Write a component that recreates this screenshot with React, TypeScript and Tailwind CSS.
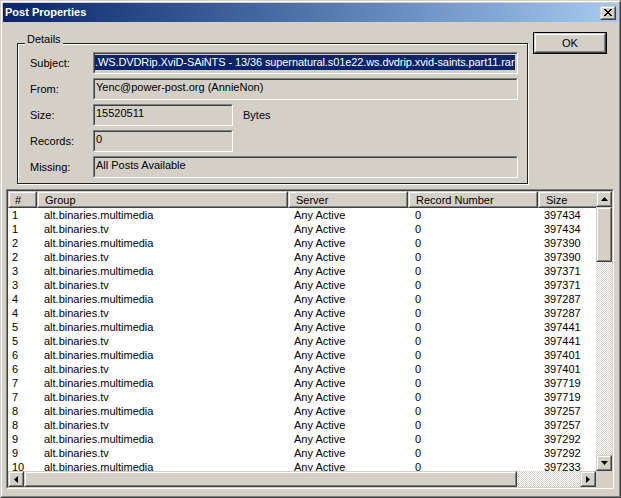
import React from 'react';

const rows: [number, string, number][] = [
  [1, 'alt.binaries.multimedia', 397434],
  [1, 'alt.binaries.tv', 397434],
  [2, 'alt.binaries.multimedia', 397390],
  [2, 'alt.binaries.tv', 397390],
  [3, 'alt.binaries.multimedia', 397371],
  [3, 'alt.binaries.tv', 397371],
  [4, 'alt.binaries.multimedia', 397287],
  [4, 'alt.binaries.tv', 397287],
  [5, 'alt.binaries.multimedia', 397441],
  [5, 'alt.binaries.tv', 397441],
  [6, 'alt.binaries.multimedia', 397401],
  [6, 'alt.binaries.tv', 397401],
  [7, 'alt.binaries.multimedia', 397719],
  [7, 'alt.binaries.tv', 397719],
  [8, 'alt.binaries.multimedia', 397257],
  [8, 'alt.binaries.tv', 397257],
  [9, 'alt.binaries.multimedia', 397292],
  [9, 'alt.binaries.tv', 397292],
  [10, 'alt.binaries.multimedia', 397233],
];

// classic 3D raised box (buttons, headers, scroll arrows)
function Raised({ className = '', inner = '', children }: { className?: string; inner?: string; children?: React.ReactNode }) {
  return (
    <div className={`border border-t-[#d4d0c8] border-l-[#d4d0c8] border-r-[#404040] border-b-[#404040] ${className}`}>
      <div className={`h-full w-full border border-t-white border-l-white border-r-[#808080] border-b-[#808080] bg-[#d4d0c8] ${inner}`}>
        {children}
      </div>
    </div>
  );
}

function Field({ className = '', children }: { className?: string; children?: React.ReactNode }) {
  return (
    <div className={`h-[22px] border border-t-[#808080] border-l-[#808080] border-r-white border-b-white ${className}`}>
      <div className="h-full border border-t-[#404040] border-l-[#404040] border-r-[#d4d0c8] border-b-[#d4d0c8] bg-[#d4d0c8] overflow-hidden whitespace-nowrap">
        {children}
      </div>
    </div>
  );
}

function Arrow({ dir }: { dir: 'up' | 'down' | 'left' | 'right' }) {
  const pts = {
    up: '3.5,0 7,4 0,4',
    down: '0,0 7,0 3.5,4',
    left: '4,0 4,7 0,3.5',
    right: '0,0 4,3.5 0,7',
  }[dir];
  const vertical = dir === 'up' || dir === 'down';
  return (
    <Raised className="w-[16px] h-[16px] shrink-0" inner="flex items-center justify-center">
      <svg width={vertical ? 7 : 4} height={vertical ? 4 : 7} viewBox={vertical ? '0 0 7 4' : '0 0 4 7'}>
        <polygon points={pts} fill="#000" />
      </svg>
    </Raised>
  );
}

const track = '[background-image:repeating-conic-gradient(#fff_0%_25%,#d4d0c8_0%_50%)] [background-size:2px_2px]';

export default function App() {
  return (
    <div className="w-[621px] h-[498px] font-[Liberation_Sans,Arial,sans-serif] text-[11px] text-black border border-t-[#d4d0c8] border-l-[#d4d0c8] border-r-[#404040] border-b-[#404040]">
      <div className="h-full border border-t-white border-l-white border-r-[#808080] border-b-[#808080] bg-[#d4d0c8] p-[1px] flex flex-col">
        {/* Title bar */}
        <div className="h-[19px] shrink-0 flex items-center justify-between bg-linear-to-r from-[#0a246a] to-[#a6caf0]">
          <span className="pl-[2px] font-bold text-white leading-[19px]">Post Properties</span>
          <Raised className="w-[16px] h-[14px] mr-[2px]" inner="flex items-center justify-center">
            <svg width="8" height="7" viewBox="0 0 8 7" shapeRendering="crispEdges">
              <path d="M0 0h2v1h1v1h2v-1h1v-1h2v1h-1v1h-1v1h-1v1h1v1h1v1h1v1h-2v-1h-1v-1h-2v1h-1v1h-2v-1h1v-1h1v-1h1v-1h-1v-1h-1v-1h-1z" fill="#000" />
            </svg>
          </Raised>
        </div>

        {/* Body */}
        <div className="flex-1 flex flex-col">
          <div className="flex items-start pl-[14px]">
            {/* Details group */}
            <div className="relative mt-[21px] w-[511px] border border-[#202020] shadow-[1px_1px_0_#fff,inset_1px_1px_0_#fff] pt-[8px] pb-[5px] pl-[12px] pr-[8px]">
              <span className="absolute -top-[11px] left-[7px] bg-[#d4d0c8] px-[2px] leading-[13px]">Details</span>
              <div className="flex flex-col gap-[4px]">
                <div className="flex items-center">
                  <span className="w-[63px]">Subject:</span>
                  <Field className="w-[425px]">
                    <div className="pt-[1px] pr-[1px]">
                      <div className="h-[15px] leading-[15px] bg-[#0a246a] text-white overflow-hidden whitespace-nowrap tracking-[-0.1px]">
                        .WS.DVDRip.XviD-SAiNTS - 13/36 supernatural.s01e22.ws.dvdrip.xvid-saints.part11.rar
                      </div>
                    </div>
                  </Field>
                </div>
                <div className="flex items-center">
                  <span className="w-[63px]">From:</span>
                  <Field className="w-[425px]">
                    <div className="pl-[1px] leading-[15px]">Yenc@power-post.org (AnnieNon)</div>
                  </Field>
                </div>
                <div className="flex items-center">
                  <span className="w-[63px]">Size:</span>
                  <Field className="w-[140px]">
                    <div className="pl-[1px] leading-[15px]">15520511</div>
                  </Field>
                  <span className="ml-[10px]">Bytes</span>
                </div>
                <div className="flex items-center">
                  <span className="w-[63px]">Records:</span>
                  <Field className="w-[140px]">
                    <div className="pl-[1px] leading-[15px]">0</div>
                  </Field>
                </div>
                <div className="flex items-center">
                  <span className="w-[63px]">Missing:</span>
                  <Field className="w-[425px]">
                    <div className="pl-[1px] leading-[15px]">All Posts Available</div>
                  </Field>
                </div>
              </div>
            </div>

            {/* OK button */}
            <div className="ml-[5px] mt-[10px] w-[74px] h-[22px] border border-black">
              <Raised className="h-full" inner="flex items-center justify-center">
                <span className="leading-[13px]">OK</span>
              </Raised>
            </div>
          </div>

          {/* List view */}
          <div className="mt-[5px] ml-[3px] w-[608px] h-[300px] border border-t-[#808080] border-l-[#808080] border-r-white border-b-white">
            <div className="h-full border border-t-[#404040] border-l-[#404040] border-r-[#d4d0c8] border-b-[#d4d0c8] flex">
              <div className="w-[588px] flex flex-col">
                {/* header */}
                <div className="h-[17px] flex overflow-hidden shrink-0">
                  <Raised className="w-[29px] shrink-0" inner="pl-[5px] leading-[14px]">#</Raised>
                  <Raised className="w-[251px] shrink-0" inner="pl-[6px] leading-[14px]">Group</Raised>
                  <Raised className="w-[120px] shrink-0" inner="pl-[6px] leading-[14px]">Server</Raised>
                  <Raised className="w-[130px] shrink-0" inner="pl-[6px] leading-[14px]">Record Number</Raised>
                  <Raised className="w-[90px] shrink-0" inner="pl-[6px] leading-[14px]">Size</Raised>
                </div>
                {/* rows */}
                <div className="flex-1 bg-white overflow-hidden">
                  {rows.map(([n, group, size], i) => (
                    <div key={i} className="h-[14px] leading-[14px] flex whitespace-nowrap">
                      <span className="w-[29px] pl-[4px] shrink-0">{n}</span>
                      <span className="w-[251px] pl-[7px] shrink-0">{group}</span>
                      <span className="w-[120px] pl-[6px] shrink-0">Any Active</span>
                      <span className="w-[130px] pl-[7px] shrink-0">0</span>
                      <span className="pl-[6px]">{size}</span>
                    </div>
                  ))}
                </div>
                {/* horizontal scrollbar */}
                <div className="h-[16px] flex shrink-0">
                  <Arrow dir="left" />
                  <Raised className="w-[493px] h-[16px] shrink-0" />
                  <div className={`flex-1 ${track}`} />
                  <Arrow dir="right" />
                </div>
              </div>
              {/* vertical scrollbar */}
              <div className="w-[16px] flex flex-col">
                <Arrow dir="up" />
                <Raised className="w-[16px] h-[55px] shrink-0" />
                <div className={`flex-1 ${track}`} />
                <Arrow dir="down" />
                <div className="h-[16px] shrink-0 bg-[#d4d0c8]" />
              </div>
            </div>
          </div>
        </div>
      </div>
    </div>
  );
}
